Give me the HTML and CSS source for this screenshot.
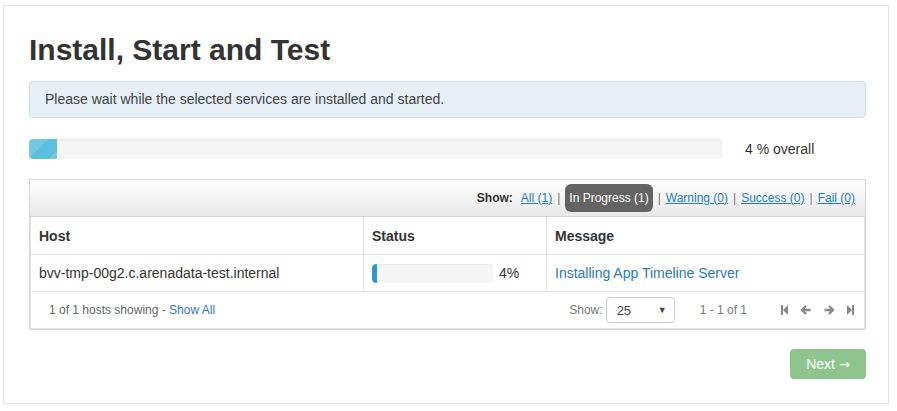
FILE: index.html
```html
<!DOCTYPE html>
<html>
<head>
<meta charset="utf-8">
<link rel="stylesheet" href="styles.css">
</head>
<body>
<div class="card">
  <h2 class="title">Install, Start and Test</h2>
  <div class="alert">Please wait while the selected services are installed and started.</div>
  <div class="overall">
    <div class="progress"><div class="progress-fill" style="width:28px"></div></div>
    <div class="overall-text">4 % overall</div>
  </div>
  <div class="hosts-box">
    <div class="filter-bar">
      <span class="show-label">Show:</span>
      <a class="flink" href="#">All (1)</a>
      <span class="sep">|</span>
      <span class="pill">In Progress (1)</span>
      <span class="sep">|</span>
      <a class="flink" href="#">Warning (0)</a>
      <span class="sep">|</span>
      <a class="flink" href="#">Success (0)</a>
      <span class="sep">|</span>
      <a class="flink" href="#">Fail (0)</a>
    </div>
    <div class="hosts-table">
      <div class="row head">
        <div class="cell c-host">Host</div>
        <div class="cell c-status">Status</div>
        <div class="cell c-msg">Message</div>
      </div>
      <div class="row body">
        <div class="cell c-host">bvv-tmp-00g2.c.arenadata-test.internal</div>
        <div class="cell c-status">
          <div class="mini-progress"><div class="mini-fill" style="width:4%"></div></div>
          <span class="pct">4%</span>
        </div>
        <div class="cell c-msg"><a class="msg-link" href="#">Installing App Timeline Server</a></div>
      </div>
      <div class="footer">
        <div class="foot-left">1 of 1 hosts showing - <a class="show-all" href="#">Show All</a></div>
        <div class="foot-right">
          <span class="foot-show">Show:</span>
          <div class="select"><span>25</span><span class="caret">&#9660;</span></div>
          <span class="range">1 - 1 of 1</span>
          <div class="pager">
            <svg width="7" height="10" viewBox="0 0 7 10"><rect x="0" y="0" width="2" height="10" fill="#888"/><polygon points="7,0 7,10 2,5" fill="#888"/></svg>
            <svg width="10" height="10" viewBox="0 0 10 10"><path d="M5 1 L1 5 L5 9 M1.5 5 H9.5" stroke="#888" stroke-width="2.4" fill="none" stroke-linejoin="miter"/></svg>
            <svg width="10" height="10" viewBox="0 0 10 10"><path d="M5 1 L9 5 L5 9 M8.5 5 H0.5" stroke="#888" stroke-width="2.4" fill="none" stroke-linejoin="miter"/></svg>
            <svg width="7" height="10" viewBox="0 0 7 10"><polygon points="0,0 0,10 5,5" fill="#888"/><rect x="5" y="0" width="2" height="10" fill="#888"/></svg>
          </div>
        </div>
      </div>
    </div>
  </div>
  <div class="actions">
    <button class="btn-next">Next <span class="arrow">&rarr;</span></button>
  </div>
</div>
</body>
</html>
```

FILE: styles.css
```css
html, body {
  margin: 0;
  padding: 0;
  background: #fff;
}
body {
  font-family: "Liberation Sans", Arial, sans-serif;
  font-size: 14px;
  color: #333;
}
.card {
  box-sizing: border-box;
  margin: 5px 0 0 3px;
  width: 886px;
  border: 1px solid #e3e3e3;
  padding: 27px 22px 24px 25px;
}
.title {
  margin: 0;
  font-size: 30px;
  line-height: 33px;
  font-weight: bold;
  color: #333;
}
.alert {
  margin-top: 15px;
  background: #e5eff5;
  border: 1px solid #cbdbe3;
  border-radius: 4px;
  padding: 8px 15px;
  line-height: 19px;
  color: #444;
}
.overall {
  margin-top: 21px;
  display: flex;
  align-items: center;
}
.progress {
  width: 693px;
  height: 20px;
  background: #f5f5f5;
  border-radius: 4px;
  box-shadow: inset 0 1px 2px rgba(0,0,0,0.08);
  overflow: hidden;
}
.progress-fill {
  height: 100%;
  background-color: #5bc0de;
  background-image: linear-gradient(135deg, rgba(255,255,255,0.15) 25%, transparent 25%, transparent 50%, rgba(255,255,255,0.15) 50%, rgba(255,255,255,0.15) 75%, transparent 75%, transparent);
  background-size: 40px 40px;
  border-radius: 4px 0 0 4px;
}
.overall-text {
  margin-left: 23px;
}
.hosts-box {
  margin-top: 20px;
  border: 1px solid #d6d6d6;
}
.filter-bar {
  height: 36px;
  display: flex;
  align-items: center;
  justify-content: flex-end;
  padding-right: 10px;
  font-size: 12px;
  background: linear-gradient(#ffffff, #e8e8e8);
  border-bottom: 1px solid #d6d6d6;
}
.show-label {
  font-weight: bold;
  margin-right: 8px;
}
.flink {
  color: #1a7fc4;
  text-decoration: underline;
}
.sep {
  color: #777;
  margin: 0 5px;
}
.pill {
  background: #636363;
  color: #fff;
  border-radius: 6px;
  padding: 0 4px;
  height: 28px;
  line-height: 28px;
}
.hosts-table {
  border: 1px solid #e2e2e2;
  border-top: none;
}
.row {
  display: flex;
  border-bottom: 1px solid #e2e2e2;
}
.row.head {
  height: 37px;
  font-weight: bold;
}
.row.body {
  height: 36px;
}
.cell {
  box-sizing: border-box;
  padding: 0 8px;
  display: flex;
  align-items: center;
}
.c-host {
  width: 333px;
  border-right: 1px solid #e2e2e2;
}
.c-status {
  width: 183px;
  border-right: 1px solid #e2e2e2;
}
.c-msg {
  flex: 1;
}
.mini-progress {
  width: 121px;
  height: 19px;
  background: #f5f5f5;
  border-radius: 4px;
  box-shadow: inset 0 1px 2px rgba(0,0,0,0.06);
  overflow: hidden;
}
.mini-fill {
  height: 100%;
  background: #2b98d6;
  border-radius: 4px 0 0 4px;
}
.pct {
  margin-left: 6px;
}
.msg-link {
  color: #2a7ab9;
  text-decoration: none;
}
.footer {
  height: 36px;
  display: flex;
  align-items: center;
  justify-content: space-between;
  padding: 0 10px 0 18px;
  font-size: 12px;
  color: #666;
}
.show-all {
  color: #2a7ab9;
  text-decoration: none;
}
.foot-right {
  display: flex;
  align-items: center;
}
.foot-show {
  color: #777;
  margin-right: 3px;
}
.select {
  box-sizing: border-box;
  width: 69px;
  height: 26px;
  border: 1px solid #ccc;
  border-radius: 4px;
  display: flex;
  align-items: center;
  justify-content: space-between;
  padding: 0 7px 0 10px;
  font-size: 13px;
  color: #444;
}
.caret {
  font-size: 9px;
  color: #444;
}
.range {
  margin-left: 25px;
  color: #777;
}
.pager {
  margin-left: 34px;
  display: flex;
  align-items: center;
  gap: 13px;
}
.pager svg {
  display: block;
}
.actions {
  margin-top: 19px;
  display: flex;
  justify-content: flex-end;
}
.btn-next {
  width: 76px;
  height: 30px;
  border: none;
  border-radius: 4px;
  background: #8dc58d;
  color: #fff;
  font-family: "Liberation Sans", Arial, sans-serif;
  font-size: 14px;
  padding: 0;
}
.arrow {
  font-family: "DejaVu Sans", sans-serif;
  font-size: 13px;
}
```
